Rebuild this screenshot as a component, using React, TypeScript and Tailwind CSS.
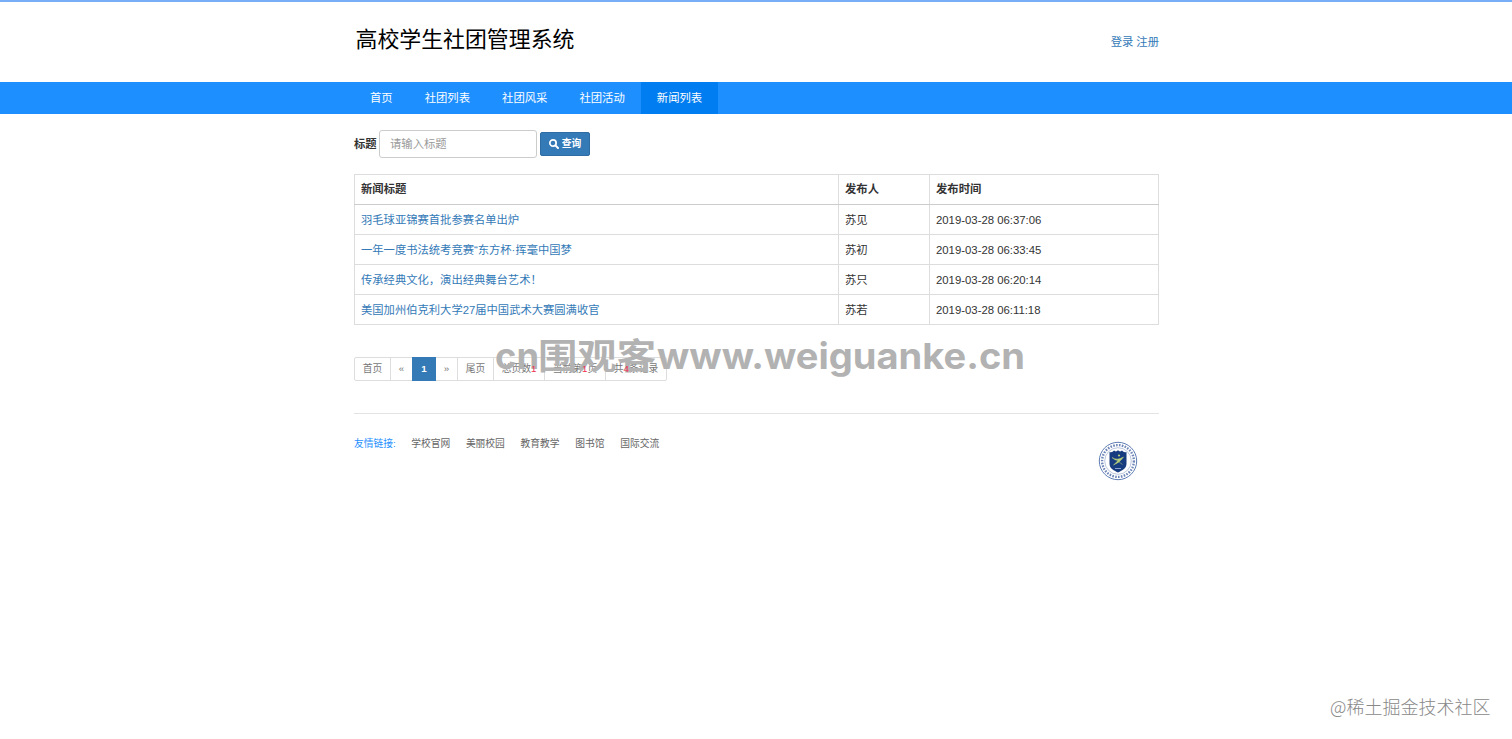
import React from "react";

const navItems = ["首页", "社团列表", "社团风采", "社团活动", "新闻列表"];

const news = [
  { title: "羽毛球亚锦赛首批参赛名单出炉", author: "苏见", time: "2019-03-28 06:37:06" },
  { title: "一年一度书法统考竞赛“东方杯·挥毫中国梦", author: "苏初", time: "2019-03-28 06:33:45" },
  { title: "传承经典文化，演出经典舞台艺术！", author: "苏只", time: "2019-03-28 06:20:14" },
  { title: "美国加州伯克利大学27届中国武术大赛圆满收官", author: "苏若", time: "2019-03-28 06:11:18" },
];

const links = ["学校官网", "美丽校园", "教育教学", "图书馆", "国际交流"];

function SearchIcon() {
  return (
    <svg viewBox="0 0 20 20" className="h-[10px] w-[10px] shrink-0" fill="none" stroke="currentColor">
      <circle cx="8" cy="8" r="6.3" strokeWidth="3.4" />
      <path d="M12.8 12.8 18 18" strokeWidth="4" strokeLinecap="round" />
    </svg>
  );
}

function Seal() {
  return (
    <svg viewBox="0 0 40 40" className="h-10 w-10">
      <circle cx="20" cy="20" r="18.7" fill="#fff" stroke="#5f7db5" strokeWidth="1" />
      <circle cx="20" cy="20" r="15.9" fill="none" stroke="#6f87b8" strokeWidth="2.4" strokeDasharray="1.6 1.3" />
      <circle cx="20" cy="20" r="13.3" fill="#fff" stroke="#8fa1c6" strokeWidth="0.6" />
      <path d="M11.500 11q2.700 1 4.500-1.400 2 1.700 4-.3 2 2 4 .3 1.800 2.400 4.500 1.400v11.500c0 5-4 6.800-8.500 9-4.500-2.200-8.500-4-8.500-9z" fill="#173c80" />
      <circle cx="21" cy="14.500" r="1.100" fill="#b9d07b" />
      <path d="M14 16.500q5 3.500 11.500-.5-3 5-10 8 3-2.500 4.500-4.500-3.500-.3-6-3zM20.500 20.500l4 3" fill="#b9d07b" stroke="#b9d07b" strokeWidth="0.5" />
      <path d="M17 27.500h6" stroke="#8aa0cc" strokeWidth="1" />
    </svg>
  );
}

function Watermark() {
  return (
    <svg
      viewBox="0 0 540 50"
      className="pointer-events-none absolute top-[332px] left-[490px] h-[50px] w-[540px] font-['Inter','Noto_Sans_CJK_SC',sans-serif] font-bold"
      fill="#b2b2b2"
    >
      <text x="5" y="37" fontSize="36" textLength="44" lengthAdjust="spacingAndGlyphs">cn</text>
      <text x="48" y="37" fontSize="35" textLength="118" lengthAdjust="spacingAndGlyphs">围观客</text>
      <text x="167" y="37" fontSize="36" textLength="368" lengthAdjust="spacingAndGlyphs">www.weiguanke.cn</text>
    </svg>
  );
}

function Count({ value }: { value: number }) {
  return <b className="relative z-10 font-normal text-[#f03050]">{value}</b>;
}

export default function App() {
  return (
    <div className="relative h-[739px] overflow-hidden bg-white font-['Liberation_Sans','Noto_Sans_CJK_SC',sans-serif] text-[11.35px] leading-4 text-[#333]">
      <div className="h-[2px] bg-[#77aef5]" />
      <header className="mx-auto flex h-20 w-[806px] justify-between">
        <h1 className="pt-[22px] pl-[2.5px] text-[21.9px] leading-8 text-black">高校学生社团管理系统</h1>
        <div className="flex gap-[3px] pt-8 text-[#337ab7]">
          <a>登录</a>
          <a>注册</a>
        </div>
      </header>

      <nav className="h-8 bg-[#1e8fff]">
        <div className="mx-auto flex h-full w-[806px] pl-px text-white">
          {navItems.map((item, i) => (
            <a key={item} className={`flex items-center px-4 ${i === 4 ? "bg-[#007df0]" : ""}`}>
              {item}
            </a>
          ))}
        </div>
      </nav>

      <main className="mx-auto w-[806px]">
        <form className="flex h-[60px] items-center pl-px">
          <label className="w-[25px] font-bold whitespace-nowrap">标题</label>
          <input
            placeholder="请输入标题"
            className="h-7 w-[158px] rounded-[3px] border border-[#ccc] px-[10px] text-[11.35px] placeholder:text-[#999]"
          />
          <button
            type="button"
            className="ml-[3px] flex h-6 w-[50px] items-center justify-center gap-[3px] rounded-[2px] border border-[#2e6da4] bg-[#337ab7] text-[9.750px] font-bold whitespace-nowrap text-white"
          >
            <SearchIcon />
            查询
          </button>
        </form>

        <table className="ml-px w-[805px] table-fixed border-collapse">
          <colgroup>
            <col className="w-[484px]" />
            <col className="w-[91px]" />
            <col className="w-[229px]" />
          </colgroup>
          <thead>
            <tr className="h-[30px] text-left">
              {["新闻标题", "发布人", "发布时间"].map((h) => (
                <th key={h} className="border border-[#ddd] border-b-[#ccc] px-[6px] pt-0 pb-px font-bold">{h}</th>
              ))}
            </tr>
          </thead>
          <tbody>
            {news.map((n) => (
              <tr key={n.time} className="h-[30px]">
                <td className="border border-[#ddd] px-[6px] py-0 text-[11.3px] text-[#337ab7]">{n.title}</td>
                <td className="border border-[#ddd] px-[6px] py-0">{n.author}</td>
                <td className="border border-[#ddd] px-[6px] py-0">{n.time}</td>
              </tr>
            ))}
          </tbody>
        </table>

        <div className="mt-[31.5px] ml-px flex h-[24.5px] w-[313px] rounded-[2px] border border-[#ddd] text-[9.750px] text-[#777]">
          <span className="flex w-[36px] items-center justify-center border-r border-[#ddd]">首页</span>
          <span className="flex w-[21px] items-center justify-center">«</span>
          <span className="-my-px flex w-[24px] items-center justify-center bg-[#337ab7] font-bold text-white">1</span>
          <span className="flex w-[22px] items-center justify-center border-r border-[#ddd]">»</span>
          <span className="flex w-[36px] items-center justify-center border-r border-[#ddd]">尾页</span>
          <span className="flex w-[51px] items-center justify-center border-r border-[#ddd]">总页数<Count value={1} /></span>
          <span className="flex w-[61px] items-center justify-center border-r border-[#ddd]">当前第<Count value={1} />页</span>
          <span className="flex flex-1 items-center justify-center">共<Count value={4} />条记录</span>
        </div>

        <footer className="mt-8 ml-px flex justify-between border-t border-[#e3e3e3] text-[9.750px] text-[#666]">
          <div className="flex gap-[15.7px] pt-[22px] whitespace-nowrap">
            <span className="w-[41.500px] text-[#1e8fff]">友情链接:</span>
            {links.map((l) => (
              <a key={l}>{l}</a>
            ))}
          </div>
          <div className="pt-[27px] pr-[21px]">
            <Seal />
          </div>
        </footer>
      </main>

      <Watermark />
      <div className="absolute top-[694px] left-[1330px] font-['Noto_Sans_CJK_SC',sans-serif] text-[18px] leading-6 font-light whitespace-nowrap text-[#888]">
        @稀土掘金技术社区
      </div>
    </div>
  );
}
